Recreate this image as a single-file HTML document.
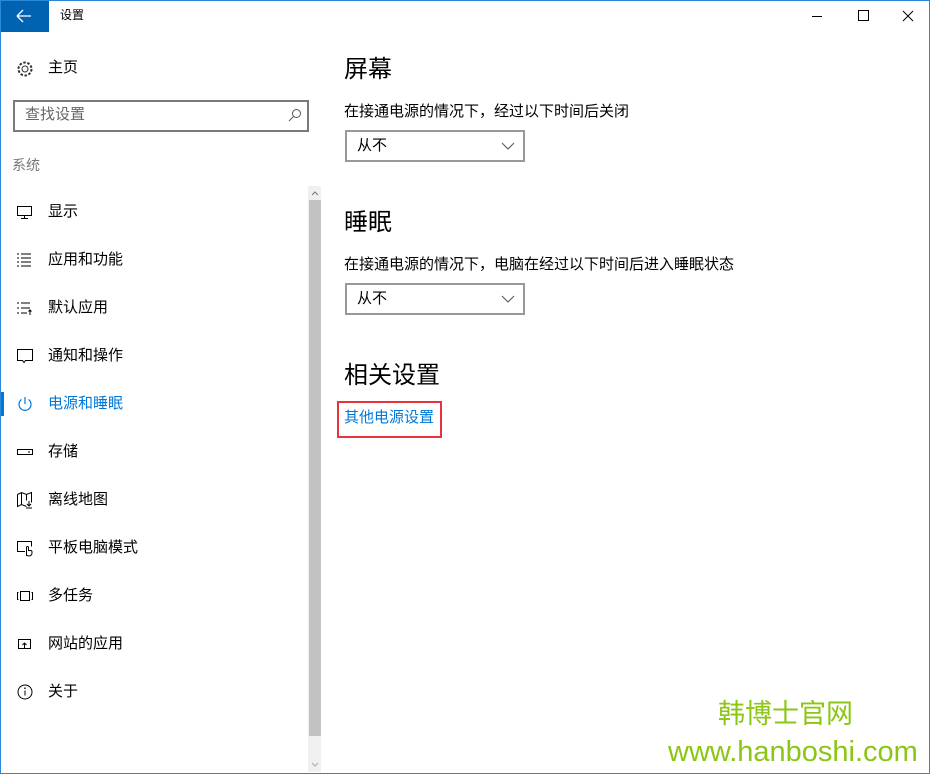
<!DOCTYPE html>
<html><head><meta charset="utf-8">
<style>
*{margin:0;padding:0;box-sizing:border-box}
body{width:933px;height:774px;background:#fff;position:relative;overflow:hidden;font-family:"Liberation Sans","Noto Sans CJK SC","Microsoft YaHei",sans-serif;color:#000}
.win{position:absolute;left:0;top:0;width:930px;height:774px;background:#fff}
.bd{position:absolute;background:#2b88d8}
.abs{position:absolute}
.back{left:0;top:0;width:49px;height:32px;background:#0063b1}
.nav{position:absolute;left:48px;font-size:15px;line-height:20px}
.ic{position:absolute;left:16px;width:18px;height:18px}
.h{position:absolute;left:344px;font-size:24px;line-height:30px}
.p{position:absolute;left:344px;font-size:15px;line-height:20px}
.dd{position:absolute;left:345px;width:180px;height:32px;border:2px solid #999;font-size:15px;line-height:28px;padding-left:10px}
.dd svg{position:absolute;right:8px;top:9px}
</style></head><body>
<div class="win">
<div class="abs back"><svg width="49" height="32"><path d="M17 16H31M17 16l6-6M17 16l6 6" stroke="#fff" stroke-width="1.3" fill="none"/></svg></div>
<div class="abs" style="left:60px;top:6px;font-size:12px;line-height:18px">设置</div>
<svg class="abs" style="left:800px;top:0" width="130" height="32"><path d="M12 16.5h10" stroke="#000"/><rect x="58.5" y="10.5" width="10" height="10" stroke="#000" fill="none"/><path d="M103 11l10 10M113 11l-10 10" stroke="#000"/></svg>

<svg class="ic" style="top:60px" viewBox="0 0 18 18"><circle cx="9" cy="9" r="3" fill="none" stroke="#333"/><circle cx="9" cy="9" r="6.5" fill="none" stroke="#333" stroke-dasharray="2.5 1.6" stroke-width="2"/></svg>
<div class="nav" style="top:58px">主页</div>

<div class="abs" style="left:13px;top:100px;width:296px;height:32px;border:2px solid #7a7a7a"></div>
<div class="abs" style="left:25px;top:105px;font-size:15px;line-height:20px;color:#666">查找设置</div>
<svg class="abs" style="left:288px;top:108px" width="14" height="14"><circle cx="8.5" cy="5.5" r="4" stroke="#555" fill="none"/><path d="M5.5 8.5L1 13" stroke="#555"/></svg>

<div class="abs" style="left:12px;top:155px;font-size:14px;line-height:20px;color:#777">系统</div>

<svg class="ic" style="top:203px" viewBox="0 0 18 18"><rect x="1.5" y="3.5" width="14" height="9" fill="none" stroke="#000"/><path d="M8.5 13v2M5 15.5h7" stroke="#000"/></svg>
<div class="nav" style="top:202px">显示</div>
<svg class="ic" style="top:251px" viewBox="0 0 18 18"><path d="M1 3h2M1 7h2M1 11h2M1 15h2M5 3h10M5 7h10M5 11h10M5 15h10" stroke="#000"/></svg>
<div class="nav" style="top:250px">应用和功能</div>
<svg class="ic" style="top:299px" viewBox="0 0 18 18"><path d="M1 4h2M1 9h2M1 14h2M5 4h9M5 9h9M5 14h6M14 16v-5M12.5 12.5l1.5-1.5 1.5 1.5" stroke="#000" fill="none"/></svg>
<div class="nav" style="top:298px">默认应用</div>
<svg class="ic" style="top:347px" viewBox="0 0 18 18"><path d="M1.5 2.5h15v11h-7l-1.5 2-1.5-2h-5z" fill="none" stroke="#000"/></svg>
<div class="nav" style="top:346px">通知和操作</div>

<div class="abs" style="left:0;top:392px;width:4px;height:24px;background:#0078d7"></div>
<svg class="ic" style="top:395px" viewBox="0 0 18 18"><path d="M5.5 4.5a6 6 0 1 0 7 0M9 2v7" stroke="#0078d7" fill="none" stroke-width="1.2"/></svg>
<div class="nav" style="top:394px;color:#0078d7">电源和睡眠</div>
<svg class="ic" style="top:443px" viewBox="0 0 18 18"><rect x="1.5" y="6.5" width="15" height="5" fill="none" stroke="#000"/><path d="M12 9h2" stroke="#000"/></svg>
<div class="nav" style="top:442px">存储</div>
<svg class="ic" style="top:491px" viewBox="0 0 18 18"><path d="M1.5 3.5l4-2 5 2 5-2v10M1.5 3.5v12l4-2 5 2M5.5 1.5v12M10.5 3.5v6M13 10v5M11 13l2 2 2-2M10 17h6" fill="none" stroke="#000"/></svg>
<div class="nav" style="top:490px">离线地图</div>
<svg class="ic" style="top:539px" viewBox="0 0 18 18"><path d="M9 12.5H1.5v-10h14v5" fill="none" stroke="#000"/><path d="M10.5 16.5v-8a1 1 0 0 1 2 0v3h2a1.5 1.5 0 0 1 1.5 1.5v1a3 3 0 0 1-3 3z" fill="none" stroke="#000"/></svg>
<div class="nav" style="top:538px">平板电脑模式</div>
<svg class="ic" style="top:587px" viewBox="0 0 18 18"><rect x="4.5" y="4.5" width="9" height="9" fill="none" stroke="#000"/><path d="M2.5 5.5h-1v7h1M15.5 5.5h1v7h-1" fill="none" stroke="#000"/></svg>
<div class="nav" style="top:586px">多任务</div>
<svg class="ic" style="top:635px" viewBox="0 0 18 18"><rect x="2.5" y="4.5" width="12" height="9" fill="none" stroke="#000"/><path d="M8.5 13V8M6.5 10l2-2 2 2" fill="none" stroke="#000"/></svg>
<div class="nav" style="top:634px">网站的应用</div>
<svg class="ic" style="top:683px" viewBox="0 0 18 18"><circle cx="9" cy="9" r="7" fill="none" stroke="#000"/><path d="M9 7.5v5" stroke="#000"/><circle cx="9" cy="5.2" r=".8" fill="#000"/></svg>
<div class="nav" style="top:682px">关于</div>

<div class="abs" style="left:308px;top:186px;width:13px;height:586px;background:#f0f0f0"></div>
<div class="abs" style="left:309px;top:200px;width:12px;height:536px;background:#c2c2c2"></div>
<svg class="abs" style="left:309px;top:188px" width="12" height="10"><path d="M3 7l3-3 3 3" stroke="#777" fill="none"/></svg>
<svg class="abs" style="left:309px;top:760px" width="12" height="10"><path d="M3 3l3 3 3-3" stroke="#aaa" fill="none"/></svg>

<div class="h" style="top:55px">屏幕</div>
<div class="p" style="top:102px">在接通电源的情况下，经过以下时间后关闭</div>
<div class="dd" style="top:130px">从不<svg width="14" height="10"><path d="M1 2l6 6 6-6" stroke="#555" fill="none"/></svg></div>
<div class="h" style="top:208px">睡眠</div>
<div class="p" style="top:255px">在接通电源的情况下，电脑在经过以下时间后进入睡眠状态</div>
<div class="dd" style="top:283px">从不<svg width="14" height="10"><path d="M1 2l6 6 6-6" stroke="#555" fill="none"/></svg></div>
<div class="h" style="top:361px">相关设置</div>
<div class="abs" style="left:337px;top:401px;width:105px;height:37px;border:2px solid #e8333a"></div>
<div class="p" style="top:408px;color:#0078d7">其他电源设置</div>

<div class="abs" style="left:718px;top:697px;font-size:27px;line-height:34px;color:#8cc614">韩博士官网</div>
<div class="abs" style="left:668px;top:734px;font-size:29px;line-height:36px;color:#8cc614">www.hanboshi.com</div>

<div class="bd" style="left:0;top:0;width:930px;height:1px"></div>
<div class="bd" style="left:0;top:0;width:1px;height:774px"></div>
<div class="bd" style="left:929px;top:0;width:1px;height:774px"></div>
<div class="bd" style="left:0;top:773px;width:930px;height:1px"></div>
</div>
</body></html>
